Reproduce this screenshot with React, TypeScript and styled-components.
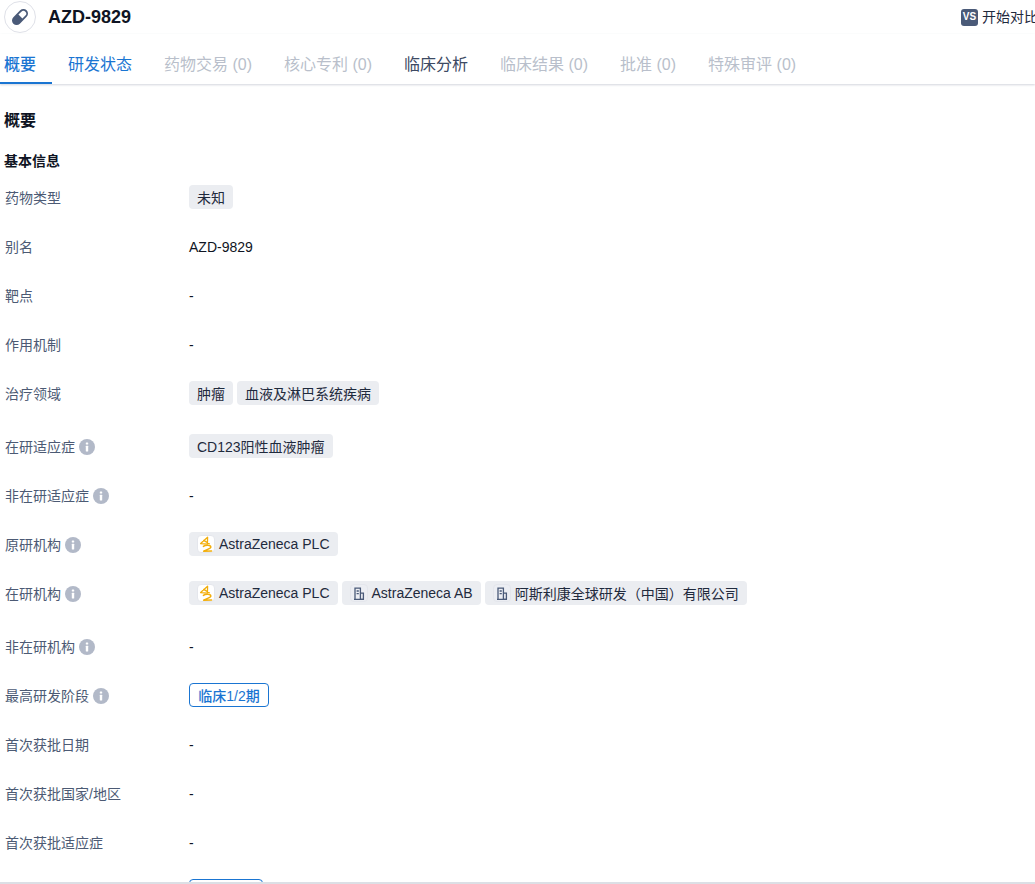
import styled, {createGlobalStyle} from 'styled-components'

const GlobalStyle = createGlobalStyle`
  html, body {
    margin: 0;
    padding: 0;
    height: 100%;
    overflow: hidden;
    background: #fff;
  }
  body {
    font-family: 'Liberation Sans', 'Noto Sans CJK SC', sans-serif;
    color: #0f1423;
  }
`

type Org = {name: string; logo: 'az' | 'building'}

type Row = {
  label: string
  info?: boolean
  tall?: boolean
  value?: string
  tags?: string[]
  orgs?: Org[]
  phase?: string
}

const tabs = [
  {text: '概要', tone: 'active'},
  {text: '研发状态', tone: 'link'},
  {text: '药物交易 (0)', tone: 'off'},
  {text: '核心专利 (0)', tone: 'off'},
  {text: '临床分析', tone: 'plain'},
  {text: '临床结果 (0)', tone: 'off'},
  {text: '批准 (0)', tone: 'off'},
  {text: '特殊审评 (0)', tone: 'off'},
]

const az: Org = {name: 'AstraZeneca PLC', logo: 'az'}

const rows: Row[] = [
  {label: '药物类型', tags: ['未知']},
  {label: '别名', value: 'AZD-9829'},
  {label: '靶点', value: '-'},
  {label: '作用机制', value: '-'},
  {label: '治疗领域', tags: ['肿瘤', '血液及淋巴系统疾病'], tall: true},
  {label: '在研适应症', info: true, tags: ['CD123阳性血液肿瘤']},
  {label: '非在研适应症', info: true, value: '-'},
  {label: '原研机构', info: true, orgs: [az]},
  {
    label: '在研机构',
    info: true,
    tall: true,
    orgs: [
      az,
      {name: 'AstraZeneca AB', logo: 'building'},
      {name: '阿斯利康全球研发（中国）有限公司', logo: 'building'},
    ],
  },
  {label: '非在研机构', info: true, value: '-'},
  {label: '最高研发阶段', info: true, phase: '临床1/2期'},
  {label: '首次获批日期', value: '-'},
  {label: '首次获批国家/地区', value: '-'},
  {label: '首次获批适应症', value: '-'},
]

function InfoIcon() {
  return (
    <InfoSvg viewBox="0 0 16 16">
      <circle cx="8" cy="8" r="8" fill="#b2b9c8" />
      <rect x="6.8" y="3.4" width="2.4" height="2.2" rx="0.6" fill="#fff" />
      <rect x="6.8" y="6.7" width="2.4" height="5.8" rx="0.5" fill="#fff" />
    </InfoSvg>
  )
}

function OrgLogo({logo}: {logo: Org['logo']}) {
  if (logo === 'az') {
    return (
      <LogoBox>
        <svg width="14" height="16" viewBox="0 0 14 16" fill="none">
          <path
            d="M8.6 1.2 1.6 7.6l6.8.6M8.6 1.2l-.2 7M4.6 4.4l5.6 3.2"
            stroke="#f2ae0c"
            strokeWidth="1.3"
            strokeLinecap="round"
            strokeLinejoin="round"
          />
          <path
            d="M4.4 10.4c1.8-1.4 6.2-1.6 7.2-.2s-.8 2.4-3 3.2l-4 1.8 8-.2"
            stroke="#f2ae0c"
            strokeWidth="1.5"
            strokeLinecap="round"
            strokeLinejoin="round"
          />
        </svg>
      </LogoBox>
    )
  }
  return (
    <LogoBox $muted>
      <svg width="12" height="13" viewBox="0 0 12 13" fill="none" stroke="#4a5a78" strokeWidth="1.3">
        <path d="M2 12.4V1.2h5.4v11.2" />
        <path d="M7.4 6.2h3v6.2h-3" />
        <path d="M1 12.4h10" />
        <path d="M3.6 4h2.2M3.6 6.6h2.2" />
      </svg>
    </LogoBox>
  )
}

export default function App() {
  return (
    <Page>
      <GlobalStyle />
      <Header>
        <DrugBadge>
          <svg width="20" height="20" viewBox="0 0 20 20">
            <g transform="rotate(-45 10 10)">
              <rect x="0.6" y="5.4" width="18.8" height="9.2" rx="4.6" fill="#4a5a78" />
              <path d="M10.6 7.2h4.2a2.8 2.8 0 0 1 0 5.6h-4.2z" fill="#fff" />
            </g>
          </svg>
        </DrugBadge>
        <Title>AZD-9829</Title>
        <CompareButton>
          <VsIcon>VS</VsIcon>
          开始对比
        </CompareButton>
      </Header>

      <TabBar>
        {tabs.map((tab) => (
          <Tab key={tab.text} $tone={tab.tone}>
            {tab.text}
          </Tab>
        ))}
      </TabBar>

      <Content>
        <SectionTitle>概要</SectionTitle>
        <SubTitle>基本信息</SubTitle>
        {rows.map((row) => (
          <InfoRow key={row.label} $tall={row.tall}>
            <Label>
              {row.label}
              {row.info && <InfoIcon />}
            </Label>
            <Value>
              {row.value && <PlainValue>{row.value}</PlainValue>}
              {row.tags?.map((tag) => <Tag key={tag}>{tag}</Tag>)}
              {row.orgs?.map((org) => (
                <Tag key={org.name}>
                  <OrgLogo logo={org.logo} />
                  {org.name}
                </Tag>
              ))}
              {row.phase && <Phase>{row.phase}</Phase>}
            </Value>
          </InfoRow>
        ))}
        <InfoRow>
          <Label />
          <Value>
            <Phase $wide />
          </Value>
        </InfoRow>
      </Content>
      <BottomLine />
    </Page>
  )
}

const Page = styled.div`
  position: relative;
  height: 884px;
  overflow: hidden;
`

const Header = styled.header`
  display: flex;
  align-items: center;
  height: 34px;
  padding-left: 4px;
`

const DrugBadge = styled.div`
  display: flex;
  align-items: center;
  justify-content: center;
  width: 32px;
  height: 32px;
  box-sizing: border-box;
  border: 1px solid #dfe1e8;
  border-radius: 50%;
`

const Title = styled.h1`
  margin: 0 0 0 12px;
  font-size: 18px;
  line-height: 24px;
  font-weight: 700;
  color: #0f1423;
`

const CompareButton = styled.div`
  display: flex;
  align-items: center;
  flex: none;
  margin-left: auto;
  width: 74px;
  white-space: nowrap;
  font-size: 14px;
  line-height: 20px;
  color: #1f2a3d;
`

const VsIcon = styled.span`
  display: inline-flex;
  align-items: center;
  justify-content: center;
  flex: none;
  width: 17px;
  height: 17px;
  margin-right: 4px;
  border-radius: 3px;
  background: #4a5a78;
  color: #fff;
  font-size: 10px;
  font-weight: 700;
`

const TabBar = styled.nav`
  display: flex;
  gap: 32px;
  height: 50px;
  box-sizing: border-box;
  padding-left: 4px;
  box-shadow: 0 1px 2px rgba(60, 70, 100, 0.22);
`

const toneColor: Record<string, string> = {
  active: '#1a75d2',
  link: '#1a75d2',
  plain: '#3d4a63',
  off: '#b9bfcb',
}

const Tab = styled.div<{$tone: string}>`
  position: relative;
  font-size: 16px;
  line-height: 24px;
  padding-top: 19px;
  height: 50px;
  box-sizing: border-box;
  white-space: nowrap;
  color: ${(p) => toneColor[p.$tone]};
  font-weight: ${(p) => (p.$tone === 'active' ? 500 : 400)};

  ${(p) =>
    p.$tone === 'active' &&
    `
    &::after {
      content: '';
      position: absolute;
      left: -4px;
      right: -16px;
      bottom: 0;
      height: 2px;
      background: #1a75d2;
    }
  `}
`

const Content = styled.main`
  padding: 25px 0 0 4px;
`

const SectionTitle = styled.h2`
  margin: 0;
  font-size: 16px;
  line-height: 24px;
  font-weight: 700;
  color: #0f1423;
`

const SubTitle = styled.h3`
  margin: 18px 0 9px;
  font-size: 14px;
  line-height: 20px;
  font-weight: 700;
  color: #0f1423;
`

const InfoRow = styled.div<{$tall?: boolean}>`
  display: flex;
  align-items: flex-start;
  height: ${(p) => (p.$tall ? 53 : 49)}px;
  padding-top: 5px;
  box-sizing: border-box;
`

const Label = styled.div`
  display: flex;
  align-items: center;
  gap: 4px;
  flex: none;
  width: 185px;
  height: 24px;
  padding-left: 1px;
  box-sizing: border-box;
  font-size: 14px;
  color: #4c5a74;
`

const InfoSvg = styled.svg`
  display: block;
  width: 16px;
  height: 16px;
  margin-top: 1px;
`

const Value = styled.div`
  display: flex;
  align-items: center;
  gap: 4px;
  min-height: 24px;
  font-size: 14px;
  color: #0f1423;
`

const PlainValue = styled.span`
  line-height: 26px;
`

const Tag = styled.span`
  display: inline-flex;
  align-items: center;
  gap: 4px;
  height: 24px;
  padding: 0 8px;
  border-radius: 4px;
  background: #ebedf1;
  font-size: 14px;
  color: #1f2a3d;
  white-space: nowrap;
`

const LogoBox = styled.span<{$muted?: boolean}>`
  display: inline-flex;
  align-items: center;
  justify-content: center;
  width: 18px;
  height: 18px;
  box-sizing: border-box;
  border-radius: 4px;
  background: ${(p) => (p.$muted ? '#eceef3' : '#fff')};
  border: 1px solid #e4e6ec;
`

const Phase = styled.span<{$wide?: boolean}>`
  display: inline-flex;
  align-items: center;
  justify-content: center;
  box-sizing: border-box;
  width: ${(p) => (p.$wide ? 74 : 80)}px;
  height: 24px;
  border: 1px solid #1a75d2;
  border-radius: 4px;
  font-size: 14px;
  color: #1a75d2;
  font-weight: 500;
  white-space: nowrap;
`

const BottomLine = styled.div`
  position: absolute;
  left: 0;
  right: 0;
  bottom: 0;
  height: 2px;
  background: #dcdfe5;
`
